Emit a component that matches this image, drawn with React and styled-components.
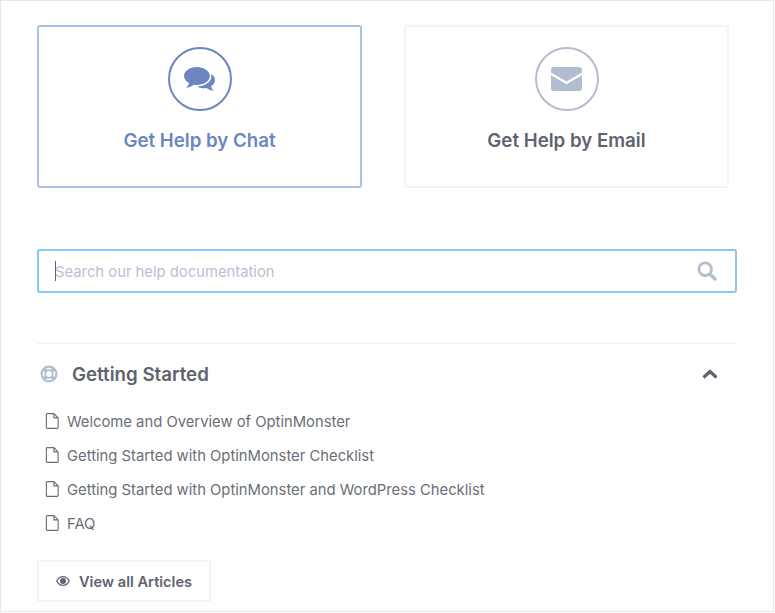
import styled, { createGlobalStyle } from "styled-components";

const articles = [
  "Welcome and Overview of OptinMonster",
  "Getting Started with OptinMonster Checklist",
  "Getting Started with OptinMonster and WordPress Checklist",
  "FAQ",
];

const ChatIcon = () => (
  <svg width="31" height="24" viewBox="0 0 30 23">
    <path
      fill="#6b86c0"
      d="M12.500 0c6.900 0 12.500 3.900 12.500 8.700s-5.600 8.700-12.500 8.700c-1.100 0-2.200-.1-3.200-.3C7.300 18.900 4.500 19.700 2 20c1.300-1.200 2.500-2.700 2.900-4.400C2 14 0 11.500 0 8.700 0 3.900 5.600 0 12.500 0z"
    />
    <path
      fill="#6b86c0"
      d="M26.300 6.600c2.400 1.300 3.700 3.500 3.700 5.800 0 2.500-1.500 4.600-3.700 6 .3 1.700 1.200 3.100 2.400 4.400-2.500-.1-5-1-6.900-2.600-1.100.2-2.200.3-3.300.2-2.200-.1-4.200-.7-5.700-1.700 7-.1 12.700-3.700 13.600-8.400.2-1.400 0-2.900-.1-3.700z"
    />
  </svg>
);

const MailIcon = () => (
  <svg width="31" height="24" viewBox="0 0 32 24" preserveAspectRatio="none">
    <path
      fill="#b3bdd1"
      d="M3 0h26a3 3 0 0 1 3 3v2.500L16 14.500 0 5.500V3a3 3 0 0 1 3-3zM0 8.200l16 9 16-9V21a3 3 0 0 1-3 3H3a3 3 0 0 1-3-3z"
    />
  </svg>
);

const SearchIcon = () => (
  <svg width="20" height="20" viewBox="0 0 20 20" fill="none" stroke="#b3bdd1">
    <circle cx="8.200" cy="8.200" r="6.300" strokeWidth="2.800" />
    <path d="M13 13l5 5" strokeWidth="3.200" strokeLinecap="round" />
  </svg>
);

const RingIcon = () => (
  <svg width="18" height="18" viewBox="0 0 18 18" fill="none" stroke="#b3bdd1">
    <circle cx="9" cy="9" r="7.400" strokeWidth="2.200" />
    <circle cx="9" cy="9" r="3.800" strokeWidth="1.800" />
    <path
      d="M3.700 3.700l2.600 2.600M14.300 3.700l-2.600 2.600M3.700 14.300l2.600-2.600M14.300 14.300l-2.600-2.600"
      strokeWidth="3.600"
    />
  </svg>
);

const ChevronIcon = () => (
  <svg width="16" height="10" viewBox="0 0 16 10" fill="none">
    <path d="M1.500 8.500L8 2.500l6.500 6" stroke="#5e6370" strokeWidth="3.200" />
  </svg>
);

const FileIcon = () => (
  <svg width="15" height="16" viewBox="0 0 15 17" fill="none">
    <path
      d="M1 1.500a.8.800 0 0 1 .8-.8h7.200L13.500 5.200v10.300a.8.800 0 0 1-.8.800H1.800a.8.800 0 0 1-.8-.8zM9 .7v4.500h4.500"
      stroke="#6a6e79"
      strokeWidth="1.200"
    />
  </svg>
);

const EyeIcon = () => (
  <svg width="14" height="10" viewBox="0 0 14 10">
    <path
      fill="#5e6370"
      fillRule="evenodd"
      d="M7 0c3 0 5.500 2 7 5-1.500 3-4 5-7 5S1.500 8 0 5c1.500-3 4-5 7-5zM7 1.200C4.900 1.200 2.800 2.600 1.400 5 2.800 7.400 4.900 8.800 7 8.800s4.200-1.400 5.600-3.800C11.200 2.600 9.100 1.200 7 1.200z"
    />
    <circle cx="7" cy="5" r="3" fill="#5e6370" />
  </svg>
);

export default function App() {
  return (
    <>
      <GlobalStyle />
      <Page>
        <CardRow>
          <Card $active>
            <IconCircle $active>
              <ChatIcon />
            </IconCircle>
            <CardTitle $active>Get Help by Chat</CardTitle>
          </Card>
          <Card>
            <IconCircle>
              <MailIcon />
            </IconCircle>
            <CardTitle>Get Help by Email</CardTitle>
          </Card>
        </CardRow>

        <SearchBox>
          <Caret />
          <SearchText>Search our help documentation</SearchText>
          <SearchIcon />
        </SearchBox>

        <Section>
          <SectionHeader>
            <RingIcon />
            <SectionTitle>Getting Started</SectionTitle>
            <ChevronIcon />
          </SectionHeader>
          <ArticleList>
            {articles.map((title) => (
              <Article key={title}>
                <FileIcon />
                <ArticleTitle>{title}</ArticleTitle>
              </Article>
            ))}
          </ArticleList>
          <ViewAll>
            <EyeIcon />
            <ViewAllLabel>View all Articles</ViewAllLabel>
          </ViewAll>
        </Section>
      </Page>
    </>
  );
}

const GlobalStyle = createGlobalStyle`
  html, body {
    margin: 0;
    padding: 0;
    background: #fff;
  }
  body {
    font-family: "Inter", "Liberation Sans", sans-serif;
    color: #5e6370;
  }
`;

const Page = styled.div`
  box-sizing: border-box;
  width: 774px;
  height: 612px;
  padding: 24px 37px 0 36px;
  border: 1px solid #e8e8e8;
  overflow: hidden;
`;

const CardRow = styled.div`
  display: flex;
  gap: 42px;
`;

const Card = styled.div`
  box-sizing: border-box;
  width: 325px;
  height: 163px;
  padding-top: 20px;
  display: flex;
  flex-direction: column;
  align-items: center;
  border: 2px solid ${({ $active }) => ($active ? "#a9c1e8" : "#f3f4f8")};
  border-radius: 3px;
`;

const IconCircle = styled.div`
  box-sizing: border-box;
  width: 64px;
  height: 64px;
  display: flex;
  align-items: center;
  justify-content: center;
  border: 2px solid ${({ $active }) => ($active ? "#6b86c0" : "#b3bdd1")};
  border-radius: 50%;
`;

const CardTitle = styled.div`
  margin-top: 18px;
  font-size: 18.700px;
  font-weight: 600;
  line-height: 24px;
  color: ${({ $active }) => ($active ? "#6b86c0" : "#5e6370")};
`;

const SearchBox = styled.div`
  box-sizing: border-box;
  width: 700px;
  height: 44px;
  margin-top: 61px;
  padding: 0 18px 0 16px;
  display: flex;
  align-items: center;
  border: 2px solid #84c8f8;
  border-radius: 3px;
`;

const Caret = styled.div`
  width: 1px;
  height: 20px;
  background: #5e6370;
`;

const SearchText = styled.div`
  flex: 1;
  margin: 2px 0 0 -1px;
  font-size: 14.800px;
  color: #b9c0d3;
`;

const Section = styled.div`
  width: 700px;
  margin-top: 50px;
  border-top: 1px solid #f0f0f2;
`;

const SectionHeader = styled.div`
  height: 60px;
  padding: 0 19px 0 3px;
  display: flex;
  align-items: center;
`;

const SectionTitle = styled.div`
  flex: 1;
  margin-left: 14px;
  font-size: 18.700px;
  font-weight: 600;
`;

const ArticleList = styled.div`
  display: flex;
  flex-direction: column;
`;

const Article = styled.div`
  height: 34px;
  padding-left: 8px;
  display: flex;
  align-items: center;
  gap: 7px;
  font-size: 14.800px;
  color: #6a6e79;
`;

const ArticleTitle = styled.span`
  margin-top: 2px;
`;

const ViewAll = styled.div`
  box-sizing: border-box;
  width: 174px;
  height: 42px;
  margin-top: 20px;
  padding-left: 17px;
  display: flex;
  align-items: center;
  gap: 9px;
  border: 2px solid #f3f4f8;
  border-radius: 3px;
  font-size: 14.600px;
  font-weight: 600;
`;

const ViewAllLabel = styled.span`
  margin-top: 2px;
`;
